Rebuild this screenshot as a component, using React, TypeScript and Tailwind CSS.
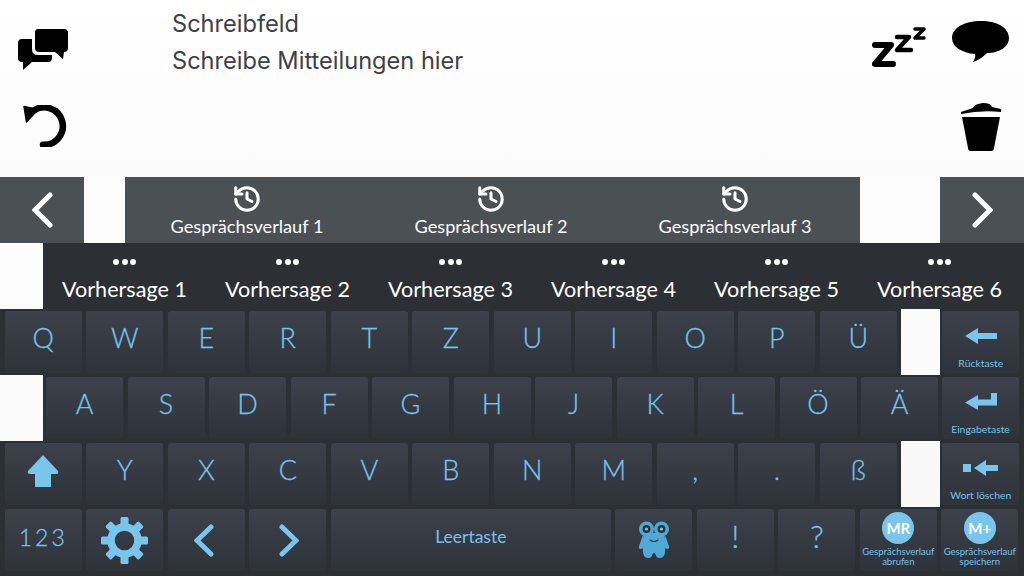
import { History } from "lucide-react";
import type { ReactNode } from "react";

const KEY_FONT = "font-['Lato','Liberation_Sans',sans-serif]";

const KEY_CLASS =
    "flex h-[62px] w-[77px] flex-none flex-col items-center justify-center rounded-[3px] bg-gradient-to-b from-[#3d414b] to-[#2e3239] text-[#76c3ed]";

function Key({ label, className = "" }: { label: string; className?: string }) {
    return <div className={`${KEY_CLASS} ${className} pb-[9px] text-[27px] font-light leading-none [-webkit-text-stroke:0.3px_#76c3ed]`}>{label}</div>;
}

function IconKey({ children, caption }: { children: ReactNode; caption: string }) {
    return (
        <div className={`${KEY_CLASS} ml-auto`}>
            <div className="flex h-[40px] items-center">{children}</div>
            <div className="mt-[2px] whitespace-nowrap text-[10.4px] leading-none">{caption}</div>
        </div>
    );
}

function ArrowLeftIcon() {
    return (
        <svg width="32" height="18" viewBox="0 0 32 18" fill="#7ac5ec">
            <path d="M0 9 L13 1 V6 H32 V12 H13 V17 Z" />
        </svg>
    );
}

function EnterIcon() {
    return (
        <svg width="32" height="18" viewBox="0 0 32 18" fill="#7ac5ec">
            <path d="M0 9.5 L13 2 V6.5 H26 V0 H32 V12.5 H13 V17 Z" />
        </svg>
    );
}

function WordDeleteIcon() {
    return (
        <svg width="35" height="18" viewBox="0 0 35 18" fill="#7ac5ec">
            <rect x="0" y="5" width="8" height="8" />
            <path d="M11 9 L23 1 V6 H35 V12 H23 V17 Z" />
        </svg>
    );
}

function ShiftIcon() {
    return (
        <svg width="32" height="33" viewBox="0 0 32 33" fill="#7ac5ec">
            <path d="M16 0 L31 16 Q32 19 29 19 H24 V32 H8 V19 H3 Q0 19 1 16 Z" />
        </svg>
    );
}

function GearIcon() {
    const teeth = [0, 45, 90, 135, 180, 225, 270, 315];
    return (
        <svg width="47" height="47" viewBox="0 0 47 47">
            <circle cx="23.5" cy="23.5" r="13.5" fill="none" stroke="#7ac5ec" strokeWidth="7.5" />
            {teeth.map((deg) => (
                <rect key={deg} x="19.5" y="0" width="8" height="9" rx="1.5" fill="#7ac5ec" transform={`rotate(${deg} 23.5 23.5)`} />
            ))}
        </svg>
    );
}

function Chevron({ dir, color, width, height, stroke }: { dir: "left" | "right"; color: string; width: number; height: number; stroke: number }) {
    const d = dir === "left" ? `M${width - 3} 3 L3 ${height / 2} L${width - 3} ${height - 3}` : `M3 3 L${width - 3} ${height / 2} L3 ${height - 3}`;
    return (
        <svg width={width} height={height} viewBox={`0 0 ${width} ${height}`} fill="none" stroke={color} strokeWidth={stroke} strokeLinecap="round" strokeLinejoin="miter">
            <path d={d} />
        </svg>
    );
}

function RobotIcon() {
    return (
        <svg width="32" height="38" viewBox="0 0 32 38">
            <path d="M5 14 L1 25 Q0 28 3 28 L5 27 Z M27 14 L31 25 Q32 28 29 28 L27 27 Z" fill="#4fa9d5" />
            <path d="M6 12 H26 Q28 20 27 30 Q27 37 22 37 Q18 37 17.5 33 Q16 31 14.5 33 Q14 37 10 37 Q5 37 5 30 Q4 20 6 12 Z" fill="#4fa9d5" />
            <circle cx="8.5" cy="8" r="7.5" fill="#4fa9d5" />
            <circle cx="23.5" cy="8" r="7.5" fill="#4fa9d5" />
            <circle cx="8.5" cy="8" r="4" fill="#2f333b" />
            <circle cx="23.5" cy="8" r="4" fill="#2f333b" />
            <circle cx="8.5" cy="8" r="1.6" fill="#7ac5ec" />
            <circle cx="23.5" cy="8" r="1.6" fill="#7ac5ec" />
            <path d="M12 19 Q16 22 20 19" fill="none" stroke="#2f333b" strokeWidth="1.2" strokeLinecap="round" />
        </svg>
    );
}

function MemoryKey({ badge, line1, line2 }: { badge: string; line1: string; line2: string }) {
    return (
        <div className={`${KEY_CLASS} justify-start pt-[3px]`}>
            <div className="flex h-[32px] w-[32px] items-center justify-center rounded-full bg-[#7ac5ec] text-[15px] font-bold leading-none text-white">
                {badge}
            </div>
            <div className="mt-[3px] whitespace-nowrap text-center text-[9.5px] leading-[10px]">
                {line1}
                <br />
                {line2}
            </div>
        </div>
    );
}

const ROW_1 = ["Q", "W", "E", "R", "T", "Z", "U", "I", "O", "P", "Ü"];
const ROW_2 = ["A", "S", "D", "F", "G", "H", "J", "K", "L", "Ö", "Ä"];
const ROW_3 = ["Y", "X", "C", "V", "B", "N", "M", ",", ".", "ß"];
const HISTORY = ["Gesprächsverlauf 1", "Gesprächsverlauf 2", "Gesprächsverlauf 3"];
const PREDICTIONS = ["Vorhersage 1", "Vorhersage 2", "Vorhersage 3", "Vorhersage 4", "Vorhersage 5", "Vorhersage 6"];

export default function App() {
    return (
        <div className={`h-[576px] w-[1024px] overflow-hidden bg-[#2c2f33] ${KEY_FONT}`}>
            {/* message area */}
            <div className="flex h-[177px] bg-gradient-to-b from-white to-[#fbfbfb]">
                <div className="flex w-[172px] flex-none flex-col items-start pl-[18px] pt-[29px]">
                    <svg width="50" height="42" viewBox="0 0 50 42" fill="#000">
                        <path d="M20 0 H46 Q50 0 50 4 V19 Q50 23 46 23 H46 L45 30 L37 23 H21 Q17 23 17 19 V4 Q17 0 20 0 Z" />
                        <path d="M14 10 V20 Q14 26 20 26 H34 V29 Q34 33 30 33 H14 L5 41 V33 H4 Q0 33 0 29 V14 Q0 10 4 10 Z" />
                    </svg>
                    <svg className="ml-[5px] mt-[34px]" width="44" height="42" viewBox="0 0 44 42" fill="none">
                        <path d="M10 6 A18.7 18.7 0 1 1 20 39.7" stroke="#000" strokeWidth="6.5" strokeLinecap="round" />
                        <path d="M1 1.5 L15 4.5 L3.5 17 Z" fill="#000" stroke="#000" strokeWidth="1.5" strokeLinejoin="round" />
                    </svg>
                </div>
                <div className="flex flex-1 flex-col pt-[9px] font-['Inter',sans-serif] text-[23.6px] leading-[38px] text-[#3c4047]">
                    <div className="h-[29px] leading-[30px]">Schreibfeld</div>
                    <div className="mt-[8px] h-[30px] leading-[30px]">Schreibe Mitteilungen hier</div>
                </div>
                <div className="flex w-[160px] flex-none flex-col items-end pr-[16px] pt-[21px]">
                    <div className="flex items-start">
                        <svg className="mt-[5px]" width="54" height="42" viewBox="0 0 54 42" fill="none" stroke="#000" strokeLinecap="round" strokeLinejoin="round">
                            <path d="M3 19 H19 L3 38 H21" strokeWidth="6" />
                            <path d="M25 11 H37 L25 24 H39" strokeWidth="4.5" />
                            <path d="M43 3 H52 L43 12 H52" strokeWidth="3.5" />
                        </svg>
                        <svg className="ml-[26px] mr-[-2px]" width="58" height="42" viewBox="0 0 58 42" fill="#000">
                            <path d="M29 0 C46 0 57 7 57 17 C57 26 47 32 35 32 Q28 39 21 41 Q24 36 23 33 C10 32 0 26 0 17 C0 7 12 0 29 0 Z" />
                        </svg>
                    </div>
                    <svg className="mr-[7px] mt-[35px]" width="40" height="48" viewBox="0 0 40 48" fill="#000">
                        <path d="M0 9 L12 5 Q13 1 22 0 Q30 0 31 4 L40 6 V9 Q20 7 0 11 Z" />
                        <path d="M1 14 H39 L33 45 Q33 48 30 48 H10 Q7 48 7 45 Z" />
                    </svg>
                </div>
            </div>

            {/* history row */}
            <div className="flex h-[66px] bg-[#fcfcfc] text-white">
                <div className="flex w-[84px] flex-none items-center justify-center bg-[#4b5055]">
                    <Chevron dir="left" color="#fff" width={21} height={36} stroke={5} />
                </div>
                <div className="ml-[41px] flex w-[735px] flex-none bg-[#4b5055] pr-[3px]">
                    {HISTORY.map((item) => (
                        <div key={item} className="flex flex-1 flex-col items-center pt-[7px]">
                            <History size={30} strokeWidth={2.4} color="#fff" />
                            <div className="mt-[2px] whitespace-nowrap text-[18.2px] leading-[20px]">{item}</div>
                        </div>
                    ))}
                </div>
                <div className="ml-auto flex w-[84px] flex-none items-center justify-center bg-[#4b5055]">
                    <Chevron dir="right" color="#fff" width={21} height={36} stroke={5} />
                </div>
            </div>

            {/* prediction row */}
            <div className="flex h-[66px]">
                <div className="w-[43px] flex-none bg-[#fcfcfc]" />
                <div className="flex flex-1 pr-[3px] text-white">
                    {PREDICTIONS.map((item) => (
                        <div key={item} className="flex flex-1 flex-col items-center pt-[16px]">
                            <div className="flex gap-[2.5px]">
                                <span className="h-[6px] w-[6px] rounded-full bg-white" />
                                <span className="h-[6px] w-[6px] rounded-full bg-white" />
                                <span className="h-[6px] w-[6px] rounded-full bg-white" />
                            </div>
                            <div className="mt-[11px] whitespace-nowrap text-[21.6px] leading-[26px]">{item}</div>
                        </div>
                    ))}
                </div>
            </div>

            {/* keyboard */}
            <div className="flex h-[66px] items-center gap-[4.5px] pl-[4.8px] pr-[5px]">
                {ROW_1.map((k) => (
                    <Key key={k} label={k} />
                ))}
                <div className="mr-[-2.5px] h-[66px] w-[39px] flex-none bg-[#fbfbfb]" />
                <IconKey caption="Rücktaste">
                    <ArrowLeftIcon />
                </IconKey>
            </div>
            <div className="flex h-[66px] items-center pr-[5px]">
                <div className="mr-[3px] h-[66px] w-[43px] flex-none bg-[#fbfbfb]" />
                <div className="flex gap-[4.5px]">
                    {ROW_2.map((k) => (
                        <Key key={k} label={k} />
                    ))}
                </div>
                <IconKey caption="Eingabetaste">
                    <EnterIcon />
                </IconKey>
            </div>
            <div className="flex h-[66px] items-center gap-[4.5px] pl-[4.8px] pr-[5px]">
                <div className={KEY_CLASS}>
                    <div className="pb-[6px]">
                        <ShiftIcon />
                    </div>
                </div>
                {ROW_3.map((k) => (
                    <Key key={k} label={k} />
                ))}
                <div className="mr-[-2.5px] h-[66px] w-[39px] flex-none bg-[#f8f8f8]" />
                <IconKey caption="Wort löschen">
                    <WordDeleteIcon />
                </IconKey>
            </div>
            <div className="flex h-[66px] items-center gap-[4.5px] pl-[4.8px] pr-[5px]">
                <div className={`${KEY_CLASS} pb-[6px] text-[23px] font-light tracking-[3px] [-webkit-text-stroke:0.3px_#76c3ed]`}>123</div>
                <div className={KEY_CLASS}>
                    <GearIcon />
                </div>
                <div className={KEY_CLASS}>
                    <div className="pr-[4px]">
                        <Chevron dir="left" color="#7ac5ec" width={20} height={33} stroke={5} />
                    </div>
                </div>
                <div className={KEY_CLASS}>
                    <div className="pl-[3px]">
                        <Chevron dir="right" color="#7ac5ec" width={20} height={33} stroke={5} />
                    </div>
                </div>
                <div className={`${KEY_CLASS} !w-[280px] pb-[6px] text-[17.5px]`}>Leertaste</div>
                <div className={KEY_CLASS}>
                    <RobotIcon />
                </div>
                <Key label="!" className="text-[32px]" />
                <Key label="?" className="text-[32px]" />
                <MemoryKey badge="MR" line1="Gesprächsverlauf" line2="abrufen" />
                <MemoryKey badge="M+" line1="Gesprächsverlauf" line2="speichern" />
            </div>
        </div>
    );
}
